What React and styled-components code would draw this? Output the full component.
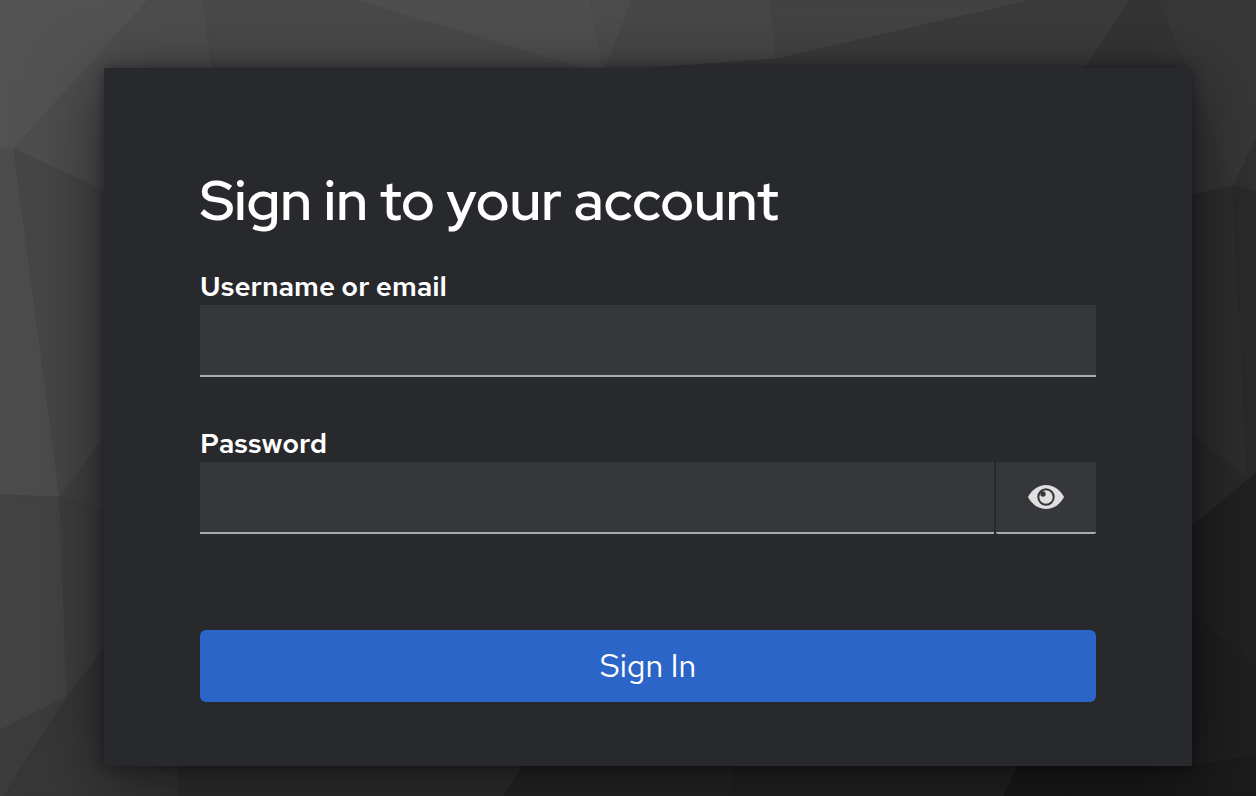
import React, { useState } from "react";
import styled, { createGlobalStyle } from "styled-components";

const GlobalStyle = createGlobalStyle`
  *, *::before, *::after { box-sizing: border-box; }
  body {
    margin: 0;
    background: #2a2a2a;
    color: #fff;
    font-family: "Red Hat Text", Lato, "Liberation Sans", sans-serif;
  }
`;

const Page = styled.div`
  position: relative;
  min-height: 100vh;
  padding: 68px 64px 30px 104px;
  overflow: hidden;
`;

const Backdrop = styled.svg`
  position: absolute;
  inset: 0;
  width: 100%;
  height: 100%;
`;

const Card = styled.main`
  position: relative;
  padding: 96px 96px 64px;
  background: #28292d;
  box-shadow: 0 16px 64px rgba(3, 3, 3, 0.56), 0 0 12px rgba(3, 3, 3, 0.36);
`;

const Title = styled.h1`
  margin: 0 0 32px;
  font-family: "Red Hat Display", Lato, "Liberation Sans", sans-serif;
  font-size: 56px;
  line-height: 72px;
  font-weight: 600;
`;

const Form = styled.form`
  display: flex;
  flex-direction: column;
  gap: 48px;
`;

const Field = styled.div`
  display: flex;
  flex-direction: column;
`;

const Label = styled.label`
  align-self: flex-start;
  font-size: 28px;
  line-height: 37px;
  font-weight: 600;
`;

const InputRow = styled.div`
  display: flex;
  gap: 2px;
`;

const TextInput = styled.input`
  flex: 1;
  min-width: 0;
  height: 72px;
  padding: 0 16px;
  border: 0;
  border-bottom: 2px solid #aaabac;
  border-radius: 0;
  outline: none;
  background: #36373a;
  color: #fff;
  font: inherit;
  font-size: 32px;
`;

const RevealButton = styled.button`
  display: flex;
  align-items: center;
  justify-content: center;
  width: 100px;
  height: 72px;
  padding: 0;
  border: 0;
  border-bottom: 2px solid #aaabac;
  border-radius: 0 0 2px 2px;
  background: #36373a;
  color: #e0e0e0;
  cursor: pointer;
`;

const SubmitButton = styled.button`
  height: 72px;
  margin-top: 48px;
  padding: 0 32px;
  border: 0;
  border-radius: 6px;
  background: #2b65c8;
  color: #fff;
  font: inherit;
  font-size: 32px;
  line-height: 48px;
  cursor: pointer;
`;

const facets = [
  ["0,0 148,0 14,149 0,149", "#525252"],
  ["148,0 203,0 230,200 104,191 14,149", "#4d4d4d"],
  ["203,0 358,0 583,68 583,120 219,120", "#494949"],
  ["358,0 590,0 603,68 603,90 583,68", "#4f4f4f"],
  ["590,0 632,0 606,68 603,68", "#4c4c4c"],
  ["632,0 771,0 776,59 650,68 606,68", "#474747"],
  ["771,0 1033,0 820,49 776,59", "#434343"],
  ["1033,0 1130,0 1086,68 1080,120 580,120 606,68 650,68 776,59 820,49", "#3b3b3b"],
  ["1130,0 1158,0 1186,68 1186,120 1052,120", "#343434"],
  ["1158,0 1256,0 1256,140 1233,186", "#373737"],
  ["1158,0 1233,186 1192,195 1150,204 1150,68 1186,68", "#353535"],
  ["1256,140 1256,192 1233,186", "#303030"],
  ["1150,204 1233,186 1248,480 1150,400", "#2d2d2d"],
  ["1233,186 1256,192 1256,473 1248,480", "#2a2a2a"],
  ["1150,400 1248,480 1150,562", "#292929"],
  ["1150,562 1256,473 1256,667 1150,578", "#212121"],
  ["1150,578 1256,667 1256,756 1150,773", "#1f1f1f"],
  ["0,149 14,149 60,497 0,495", "#4c4c4c"],
  ["14,149 104,191 150,212 150,376 60,497", "#464646"],
  ["60,497 150,376 150,526", "#404040"],
  ["0,495 60,497 67,697 0,730", "#434343"],
  ["60,497 150,526 150,588 67,697", "#3e3e3e"],
  ["0,730 67,697 4,796 0,796", "#3c3c3c"],
  ["67,697 150,588 178,740 178,796 4,796", "#373737"],
  ["178,740 540,740 504,796 178,796", "#303030"],
  ["540,740 735,740 732,796 504,796", "#262626"],
  ["735,740 1030,740 1004,796 732,796", "#242424"],
  ["1030,740 1192,740 1192,766 1060,796 1004,796", "#1a1a1a"],
  ["1060,796 1192,766 1256,756 1256,796", "#1b1b1b"],
];

function EyeIcon({ crossed }) {
  return (
    <svg width="36" height="24" viewBox="0 0 36 24" aria-hidden="true">
      <path
        fill="currentColor"
        d="M0 12C3.500 5 10.200 0 18 0s14.500 5 18 12c-3.500 7-10.200 12-18 12S3.500 19 0 12z"
      />
      <circle cx="18" cy="12" r="7.700" fill="none" stroke="#36373a" strokeWidth="2" />
      <circle cx="15" cy="9" r="2.700" fill="#36373a" />
      {crossed && <path d="M6 1l24 22" stroke="#36373a" strokeWidth="3" />}
    </svg>
  );
}

export default function App() {
  const [visible, setVisible] = useState(false);

  return (
    <>
      <GlobalStyle />
      <Page>
        <Backdrop viewBox="0 0 1256 796" preserveAspectRatio="none" aria-hidden="true">
          {facets.map(([points, color]) => (
            <polygon key={points} points={points} fill={color} stroke={color} strokeWidth="1" />
          ))}
        </Backdrop>
        <Card>
          <Title>Sign in to your account</Title>
          <Form onSubmit={(event) => event.preventDefault()}>
            <Field>
              <Label htmlFor="username">Username or email</Label>
              <InputRow>
                <TextInput id="username" name="username" type="text" autoComplete="username" />
              </InputRow>
            </Field>
            <Field>
              <Label htmlFor="password">Password</Label>
              <InputRow>
                <TextInput
                  id="password"
                  name="password"
                  type={visible ? "text" : "password"}
                  autoComplete="current-password"
                />
                <RevealButton
                  type="button"
                  aria-label={visible ? "Hide password" : "Show password"}
                  onClick={() => setVisible(!visible)}
                >
                  <EyeIcon crossed={visible} />
                </RevealButton>
              </InputRow>
            </Field>
            <SubmitButton type="submit">Sign In</SubmitButton>
          </Form>
        </Card>
      </Page>
    </>
  );
}
